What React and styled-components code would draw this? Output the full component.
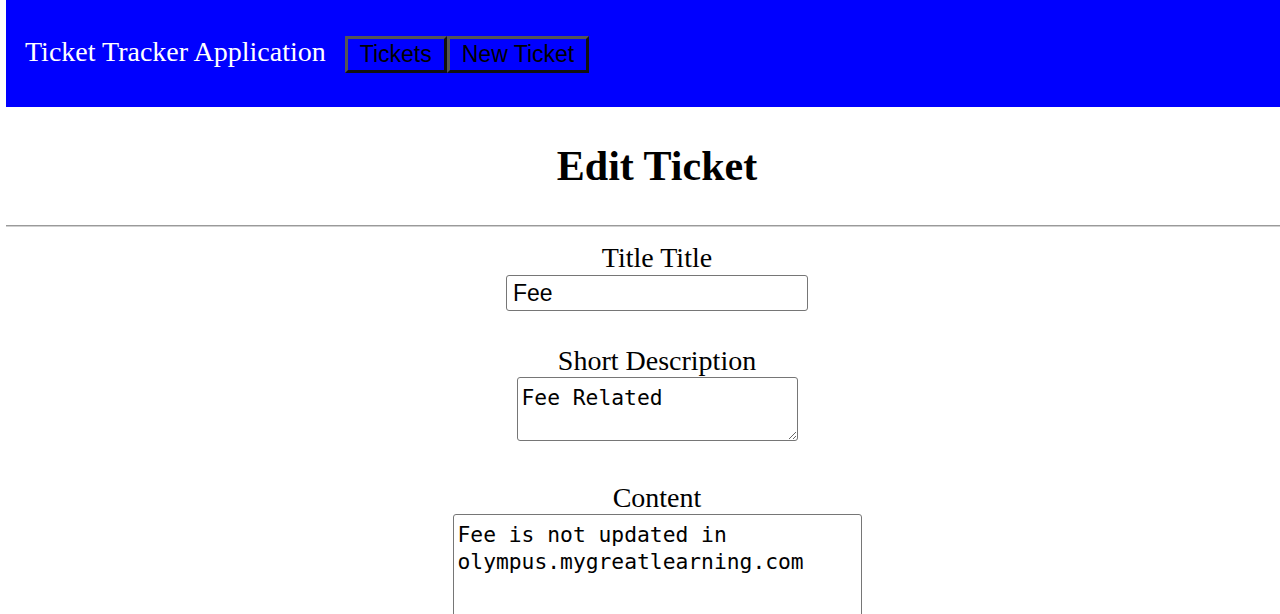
import React from "react";
import styled, { createGlobalStyle } from "styled-components";

const Global = createGlobalStyle`
  html, body { margin: 0; padding: 0; background: #fff; overflow: hidden; }
  body { font-family: "Liberation Serif", "Times New Roman", serif; }
`;

const Page = styled.div`
  width: 1302px;
  padding-left: 6px;
`;

const Header = styled.header`
  height: 107px;
  background: #0000ff;
  display: flex;
  align-items: center;
  padding-left: 19px;
  gap: 19px;
`;

const Brand = styled.span`
  color: #fff;
  font-family: "Liberation Serif", serif;
  font-size: 28px;
  line-height: 32px;
  margin-top: -3px;
`;

const Nav = styled.nav`
  display: flex;
  margin-top: 1px;
`;

const NavButton = styled.button`
  height: 37px;
  padding: 0 12px;
  background: #0000ff;
  color: #000;
  font-family: "Liberation Sans", Arial, sans-serif;
  font-size: 23px;
  border: 3px solid;
  border-color: #555 #111 #111 #555;
  cursor: pointer;
`;

const TitleBlock = styled.div`
  height: 118px;
  display: flex;
  align-items: center;
  justify-content: center;
`;

const Heading = styled.h1`
  margin: 0;
  font-size: 42px;
  font-weight: bold;
  line-height: 48px;
`;

const Rule = styled.hr`
  margin: 0;
  border: 0;
  border-top: 1px solid #9a9a9a;
  border-bottom: 1px solid #d0d0d0;
`;

const Form = styled.form`
  display: flex;
  flex-direction: column;
  align-items: center;
`;

const Field = styled.div`
  display: flex;
  flex-direction: column;
  align-items: center;
  margin-top: ${(p) => p.$top}px;
`;

const Label = styled.label`
  font-size: 28px;
  line-height: 30px;
`;

const TextInput = styled.input`
  box-sizing: border-box;
  width: 302px;
  height: 36px;
  margin-top: 2px;
  padding: 0 6px;
  font-family: "Liberation Sans", Arial, sans-serif;
  font-size: 23px;
  color: #000;
  border: 1px solid #767676;
  border-radius: 3px;
`;

const TextArea = styled.textarea`
  display: block;
  box-sizing: border-box;
  width: ${(p) => p.$w}px;
  height: ${(p) => p.$h}px;
  margin-top: 1px;
  padding: 6px 4px 3px;
  font-family: "DejaVu Sans Mono", "Liberation Mono", monospace;
  font-size: 21.3px;
  line-height: 27px;
  color: #000;
  border: 1px solid #767676;
  border-radius: 3px;
  resize: both;
`;

export default function App() {
  return (
    <>
      <Global />
      <Page>
        <Header>
          <Brand>Ticket Tracker Application</Brand>
          <Nav>
            <NavButton type="button">Tickets</NavButton>
            <NavButton type="button">New Ticket</NavButton>
          </Nav>
        </Header>
        <TitleBlock>
          <Heading>Edit Ticket</Heading>
        </TitleBlock>
        <Rule />
        <Form>
          <Field $top={16}>
            <Label>Title Title</Label>
            <TextInput defaultValue="Fee" />
          </Field>
          <Field $top={35}>
            <Label>Short Description</Label>
            <TextArea $w={281} $h={64} defaultValue="Fee Related" />
          </Field>
          <Field $top={42}>
            <Label>Content</Label>
            <TextArea
              $w={409}
              $h={140}
              defaultValue="Fee is not updated in olympus.mygreatlearning.com"
            />
          </Field>
        </Form>
      </Page>
    </>
  );
}
